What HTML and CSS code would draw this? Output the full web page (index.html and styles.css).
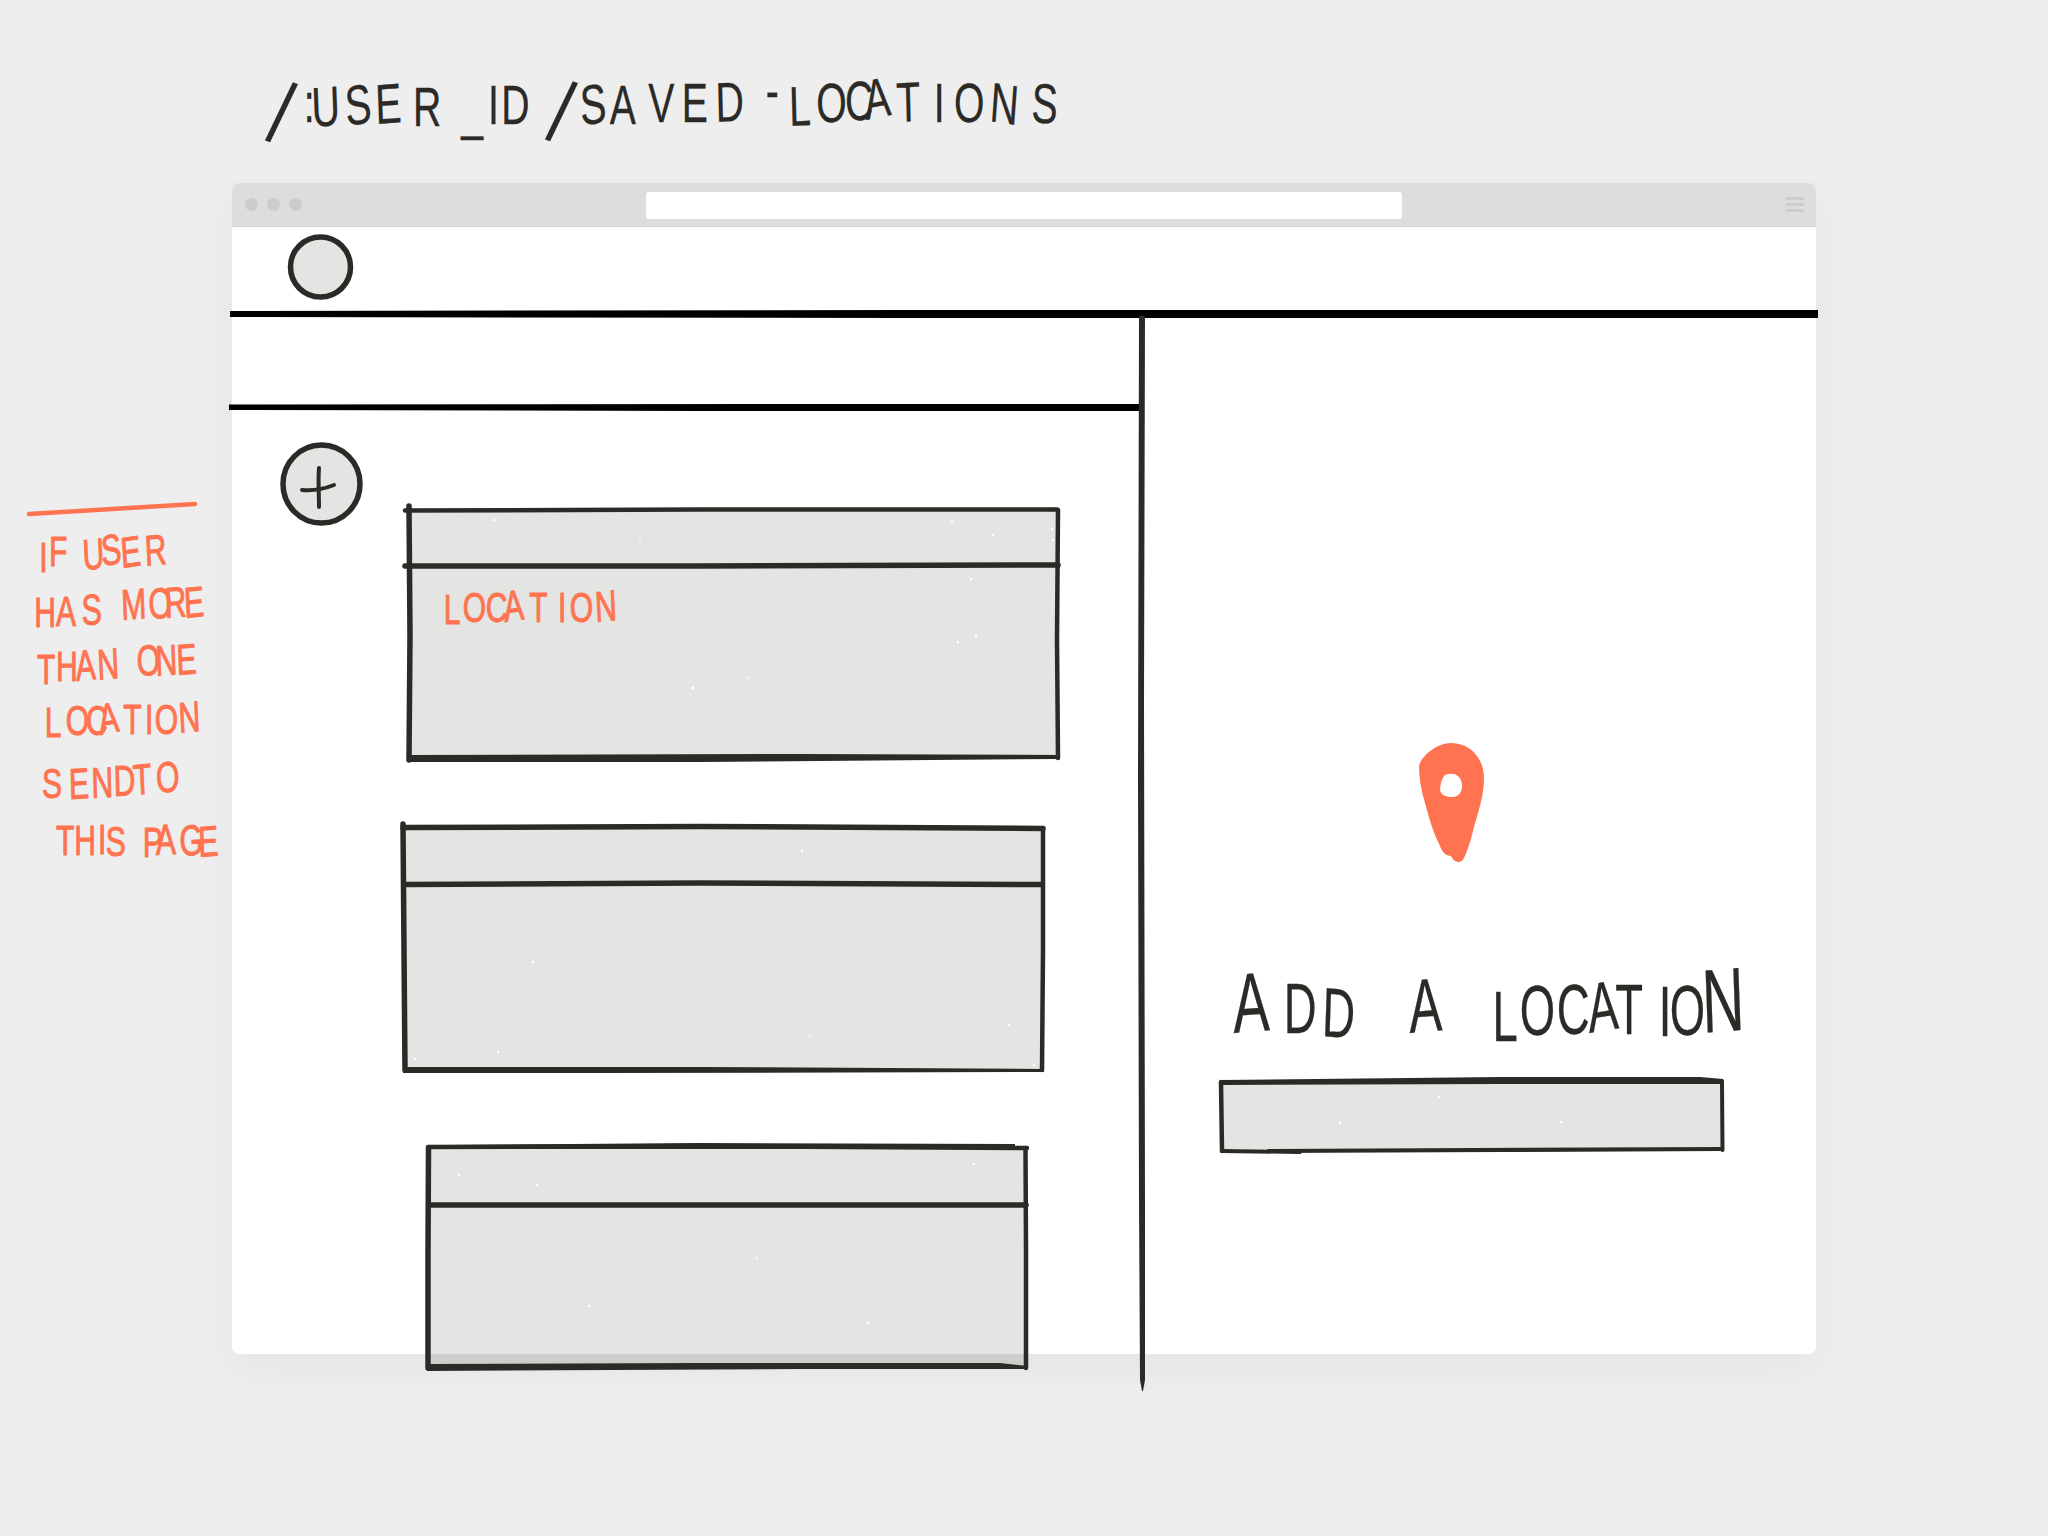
FILE: index.html
```html
<!DOCTYPE html>
<html lang="en">
<head>
<meta charset="utf-8">
<title>Saved locations wireframe</title>
<link rel="stylesheet" href="styles.css">
</head>
<body>
<main class="canvas">
  <section class="window">
    <header class="chrome">
      <div class="dots"><span class="dot"></span><span class="dot"></span><span class="dot"></span></div>
      <div class="url"></div>
      <div class="menu"><span class="menu-bar"></span><span class="menu-bar"></span><span class="menu-bar"></span></div>
    </header>
    <div class="viewport"></div>
  </section>

  <svg class="sketch" width="2048" height="1536" viewBox="0 0 2048 1536" xmlns="http://www.w3.org/2000/svg">
    <!-- structure lines -->
    <path class="black" d="M230 311 L900 310 L1818 310 L1818 318 L900 318 L230 317 Z"/>
    <path class="black" d="M229 404.5 L800 404 L1141 404 L1141 411 L700 411 L229 410 Z"/>
    <path class="ink" d="M1139 316 L1145 316 L1144 700 L1145 1200 L1145 1380 L1143 1391 L1142 1391 L1140 1380 L1139 1200 L1138 780 Z"/>

    <!-- avatar -->
    <ellipse class="fill line5" cx="320.5" cy="267" rx="30" ry="30"/>

    <!-- add button -->
    <ellipse class="fill line5" cx="321.5" cy="484" rx="38.5" ry="39"/>
    <path class="line3" d="M319 468 C318 480 319 495 319 507"/>
    <path class="line3" d="M302 490 C312 491 324 489 334 485"/>

    <!-- card 1 -->
    <path class="fill" d="M409 510 L1058 509 L1058 758 L409 758 Z"/>
    <path class="line5" d="M409 506 L410 635 L409 760"/>
    <path class="line4" d="M1058 510 L1057 640 L1058 758"/>
    <path class="line4" d="M405 510.5 L700 509.5 L1057 509.5"/>
    <path class="line5" d="M405 566 L700 566 L1058 565"/>
    <path class="ink" d="M408 755 L800 754 L1060 755 L1060 759 L700 762 L408 762 Z"/>

    <!-- card 2 -->
    <path class="fill" d="M404 828 L1043 828 L1042 1070 L405 1070 Z"/>
    <path class="line5" d="M403 824 L404 950 L405 1070"/>
    <path class="line4" d="M1043 828 L1043 950 L1042 1070"/>
    <path class="line5" d="M403 827.5 L700 826.5 L1043 828.5"/>
    <path class="line5" d="M405 884.5 L700 883 L1042 884.5"/>
    <path class="ink" d="M403 1067 L700 1067 L1044 1069 L1044 1072 L600 1073 L403 1073 Z"/>

    <!-- card 3 -->
    <path class="fill" d="M428 1148 L1026 1148 L1027 1354 L428 1354 Z"/>
    <path class="overflow" d="M428 1354 L1027 1354 L1027 1366 L428 1366 Z"/>
    <path class="line5" d="M428.5 1148 L428 1250 L428 1368"/>
    <path class="line4" d="M1025.5 1148 L1026 1250 L1026 1368"/>
    <path class="line4" d="M428 1147 L700 1146 L1027 1148"/>
    <path class="ink" d="M450 1145 L700 1143 L1015 1144 L1015 1149 L700 1149 L450 1149 Z"/>
    <path class="line5" d="M430 1205 L1026 1205"/>
    <path class="ink" d="M427 1364 L700 1363 L1000 1363 L1028 1366 L1028 1369 L800 1369 L427 1371 Z"/>

    <!-- input -->
    <path class="fill" d="M1221 1083 L1722 1081 L1723 1149 L1222 1150 Z"/>
    <path class="line4" d="M1221 1082 L1222 1151"/>
    <path class="line3" d="M1722 1081 L1722.5 1150"/>
    <path class="line3" d="M1222 1151 L1300 1152"/>
    <path class="ink" d="M1220 1080 L1500 1077 L1700 1077 L1723 1079 L1723 1084 L1500 1084 L1222 1085 Z"/>
    <path class="ink" d="M1267 1149 L1723 1147 L1723 1151 L1500 1152 L1270 1153 Z"/>

    <!-- specks -->
    <g class="specks">
      <circle cx="494" cy="520" r="1.4"/><circle cx="952" cy="522" r="1.2"/><circle cx="640" cy="541" r="1"/>
      <circle cx="993" cy="535" r="1.2"/><circle cx="1052" cy="529" r="1.2"/><circle cx="1053" cy="540" r="1.2"/>
      <circle cx="971" cy="579" r="1.2"/><circle cx="976" cy="636" r="1.4"/>
      <circle cx="693" cy="688" r="1.4"/><circle cx="958" cy="642" r="1.2"/><circle cx="748" cy="678" r="1"/>
      <circle cx="533" cy="962" r="1.5"/><circle cx="802" cy="851" r="1.2"/>
      <circle cx="1009" cy="1025" r="1.2"/><circle cx="810" cy="1036" r="1"/>
      <circle cx="498" cy="1052" r="1.2"/><circle cx="415" cy="1059" r="1.2"/><circle cx="1034" cy="1065" r="1.2"/>
      <circle cx="589" cy="1306" r="1.3"/><circle cx="868" cy="1323" r="1.3"/><circle cx="757" cy="1258" r="1"/>
      <circle cx="459" cy="1175" r="1.2"/><circle cx="537" cy="1185" r="1.3"/><circle cx="974" cy="1164" r="1.3"/>
      <circle cx="1439" cy="1097" r="1.2"/><circle cx="1340" cy="1123" r="1.2"/><circle cx="1561" cy="1122" r="1.2"/>
    </g>

    <!-- pin -->
    <path class="orange-fill" fill-rule="evenodd" d="M1451 743 C1470 743 1484 758 1484 778 C1484 796 1478 812 1474 827 C1471 840 1467 852 1464 858 C1461 864 1454 863 1451 856 C1446 856 1442 852 1440 846 C1433 832 1429 818 1425 803 C1421 790 1419 778 1419 766 C1421 756 1437 743 1451 743 Z M1449 774 C1443 774 1441 780 1440 790 C1441 795 1446 797 1452 797 C1459 797 1462 792 1462 786 C1462 778 1457 773 1449 774 Z"/>

    <!-- notes rule -->
    <path class="orange-line" d="M29 514 L195 504"/>

    <!-- handwriting: narrow, per-letter placed lettering -->
    <g transform="scale(.7 1)">
      <text class="hand title">
        <tspan class="slash" x="378" y="140" rotate="14">/</tspan>
        <tspan x="434 446 495 537 590 659 697 716" y="122 127 126 124 126 129 124 124" rotate="0 -3 -6 -3 0 0 0 0">:USER_ID</tspan>
        <tspan class="slash" x="778" y="139" rotate="14">/</tspan>
        <tspan x="830 871 926 974 1023" y="125 124 122 122 122" rotate="-4 0 0 0 -2">SAVED</tspan>
        <tspan x="1094 1128 1166 1207 1237 1281 1334 1363 1413 1473" y="110 126 122 120 120 122 122 122 121 122" rotate="0 -2 0 0 -8 -2 0 0 6 3">-LOCATIONS</tspan>
      </text>
      <text class="hand note"><tspan x="56 70 99 119 146 174 208" y="572 566 566 570 566 568 566" rotate="0 0 0 -4 -6 -6 -4">IF USER</tspan></text>
      <text class="hand note"><tspan x="49 80 117 157 174 213 236 264" y="627 626 625 620 620 619 618 618" rotate="0 0 -2 0 -3 -3 -3 -4">HAS MORE</tspan></text>
      <text class="hand note"><tspan x="53 80 109 140 179 196 223 253" y="684 681 681 680 677 676 676 675" rotate="0 0 -4 -4 0 -3 -3 -3">THAN ONE</tspan></text>
      <text class="hand note"><tspan x="64 94 123 143 176 207 221 256" y="737 735 735 735 734 734 734 733" rotate="0 0 0 -8 0 0 0 -4">LOCATION</tspan></text>
      <text class="hand note"><tspan x="60 99 131 163 186 191 224" y="798 799 798 796 796 795 793" rotate="0 -2 -2 -2 0 -4 -4">SEND TO</tspan></text>
      <text class="hand note"><tspan x="80 106 140 151 186 204 223 257 284" y="855 855 854 856 856 857 855 856 857" rotate="0 0 0 0 0 0 -2 -3 -3">THIS PAGE</tspan></text>
      <text class="hand note"><tspan x="634 661 694 721 756 797 814 851" y="624 622 622 622 622 622 622 622" rotate="0 0 0 -6 0 0 0 -4">LOCATION</tspan></text>
    </g>

    <g transform="scale(.65 1)">
      <text class="hand heading">
        <tspan class="tall" x="1898" y="1033" rotate="-3">A</tspan>
        <tspan x="1975 2033" y="1033 1036" rotate="0 3">DD</tspan>
        <tspan class="mid" x="2169" y="1033" rotate="-3">A</tspan>
        <tspan x="2296 2338 2395 2445 2485 2552 2569" y="1041 1035 1034 1033 1034 1036 1035" rotate="0 0 0 -6 0 0 0">LOCATIO</tspan>
        <tspan class="taller" x="2620" y="1033" rotate="-3">N</tspan>
      </text>
    </g>
  </svg>
</main>
</body>
</html>
```

FILE: styles.css
```css
html, body {
  margin: 0;
  padding: 0;
  background: #eeeeee;
}

body {
  overflow: hidden;
}

.canvas {
  position: relative;
  width: 2048px;
  height: 1536px;
  padding: 183px 232px 182px;
  box-sizing: border-box;
  background: #eeeeee;
  font-family: "Liberation Sans", sans-serif;
}

.canvas::before {
  content: "";
  position: absolute;
  left: 232px;
  top: 183px;
  width: 1584px;
  height: 1171px;
  border-radius: 8px;
  box-shadow: 0 16px 44px rgba(0, 0, 0, 0.045);
}

.window {
  position: relative;
  display: flex;
  flex-direction: column;
  height: 1171px;
  border-radius: 8px;
  overflow: hidden;
  background: #ffffff;
}

.chrome {
  position: relative;
  display: flex;
  align-items: center;
  justify-content: space-between;
  flex: 0 0 43px;
  padding: 0 12px 0 13px;
  background: #dddddd;
  border-bottom: 1px solid #d3d3d3;
}

.dots {
  display: flex;
  gap: 9px;
}

.dot {
  width: 13px;
  height: 13px;
  border-radius: 50%;
  background: #cccccc;
}

.url {
  position: absolute;
  left: 414px;
  top: 9px;
  width: 756px;
  height: 27px;
  border-radius: 3px;
  background: #ffffff;
}

.menu {
  display: flex;
  flex-direction: column;
  gap: 3px;
}

.menu-bar {
  width: 18px;
  height: 3px;
  border-radius: 2px;
  background: #cccccc;
}

.viewport {
  flex: 1;
  background: #ffffff;
}

.sketch {
  position: absolute;
  left: 0;
  top: 0;
}

.black { fill: #000000; }
.ink { fill: #2b2a26; }
.fill { fill: #e4e4e2; }
.overflow { fill: #cdcdcb; }
.specks { fill: #ffffff; }
.orange-fill { fill: #ff7350; }

.line3, .line4, .line5 {
  stroke: #2b2a26;
  stroke-linecap: round;
  stroke-linejoin: round;
  fill: none;
}

.fill.line5 { fill: #e4e4e2; }
.line3 { stroke-width: 4px; }
.line4 { stroke-width: 4.5px; }
.line5 { stroke-width: 5.5px; }

.orange-line {
  fill: none;
  stroke: #ff7350;
  stroke-width: 4.5px;
  stroke-linecap: round;
}

.hand {
  font-family: "Liberation Sans", sans-serif;
  font-weight: 400;
  stroke-linejoin: round;
}

.title {
  font-size: 56px;
  fill: #2b2a26;
  stroke: #2b2a26;
  stroke-width: 0.3px;
}

.slash {
  font-family: "Open Sans", "Liberation Sans", sans-serif;
  font-size: 92px;
}

.heading {
  font-size: 70px;
  fill: #2b2a26;
  stroke: #2b2a26;
  stroke-width: 0.3px;
}

.tall { font-size: 84px; }
.mid { font-size: 76px; }
.taller { font-size: 90px; }

.note {
  font-size: 43px;
  fill: #ff7350;
  stroke: #ff7350;
  stroke-width: 1px;
}
```
